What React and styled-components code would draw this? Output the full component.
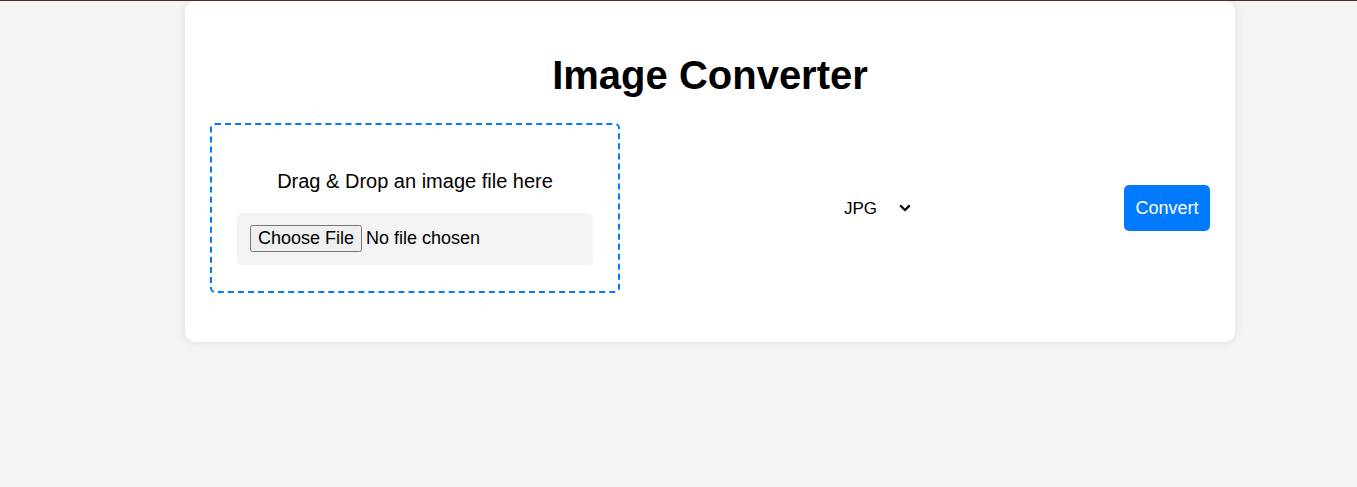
import React, { useState } from "react";
import styled, { createGlobalStyle } from "styled-components";

const Global = createGlobalStyle`
  html, body { margin: 0; padding: 0; }
  body {
    background: #f4f4f4;
    font-family: Arial, "Liberation Sans", Helvetica, sans-serif;
    border-top: 1px solid #4a2f22;
    min-height: 486px;
  }
`;

const Page = styled.div`
  display: flex;
  justify-content: flex-start;
  padding: 0 122px 0 185px;
`;

const Card = styled.div`
  width: 1050px;
  box-sizing: border-box;
  background: #ffffff;
  border-radius: 10px;
  box-shadow: 0 0 10px rgba(0, 0, 0, 0.1);
  padding: 25px;
`;

const Title = styled.h1`
  margin: 26px 0 25px;
  font-size: 40px;
  font-weight: bold;
  text-align: center;
  color: #000;
  line-height: 46px;
`;

const Row = styled.div`
  display: flex;
  justify-content: space-between;
  align-items: center;
  margin-bottom: 24px;
`;

const DropZone = styled.div`
  width: 410px;
  box-sizing: border-box;
  border: 2px dashed #007bff;
  border-radius: 5px;
  padding: 25px 25px 26px;
  text-align: center;
`;

const DropText = styled.p`
  margin: 20px 0 20px;
  font-size: 20px;
  line-height: 23px;
  color: #000;
`;

const FileInput = styled.input`
  display: block;
  width: 100%;
  box-sizing: border-box;
  background: #f4f4f4;
  border-radius: 5px;
  padding: 12px 13px 13px;
  font-size: 18px;
  font-family: Arial, "Liberation Sans", sans-serif;
  color: #000;
  text-align: left;
`;

const chevron =
  "url(\"data:image/svg+xml,%3Csvg xmlns='http://www.w3.org/2000/svg' width='12' height='8' viewBox='0 0 12 8'%3E%3Cpath d='M1.2 1.4 L6 6 L10.8 1.4' fill='none' stroke='%23000' stroke-width='2.2'/%3E%3C/svg%3E\")";

const Select = styled.select`
  appearance: none;
  -webkit-appearance: none;
  width: 84px;
  font-size: 17px;
  font-family: Arial, "Liberation Sans", sans-serif;
  padding: 10px 26px 10px 14px;
  border: none;
  background-color: #fff;
  background-image: ${chevron};
  background-repeat: no-repeat;
  background-position: right 3px center;
  background-size: 12px 8px;
  color: #000;
  outline: none;
`;

const Button = styled.button`
  background: #007bff;
  color: #fff;
  border: none;
  border-radius: 5px;
  padding: 12px 11.5px;
  font-size: 18px;
  font-family: Arial, "Liberation Sans", sans-serif;
  line-height: 22px;
  cursor: pointer;
`;

export default function App() {
  const [fmt, setFmt] = useState("jpg");
  return (
    <>
      <Global />
      <Page>
        <Card>
          <Title>Image Converter</Title>
          <Row>
            <DropZone>
              <DropText>Drag &amp; Drop an image file here</DropText>
              <FileInput type="file" accept="image/*" />
            </DropZone>
            <Select value={fmt} onChange={(e) => setFmt(e.target.value)}>
              <option value="jpg">JPG</option>
              <option value="png">PNG</option>
              <option value="webp">WEBP</option>
            </Select>
            <Button>Convert</Button>
          </Row>
        </Card>
      </Page>
    </>
  );
}
